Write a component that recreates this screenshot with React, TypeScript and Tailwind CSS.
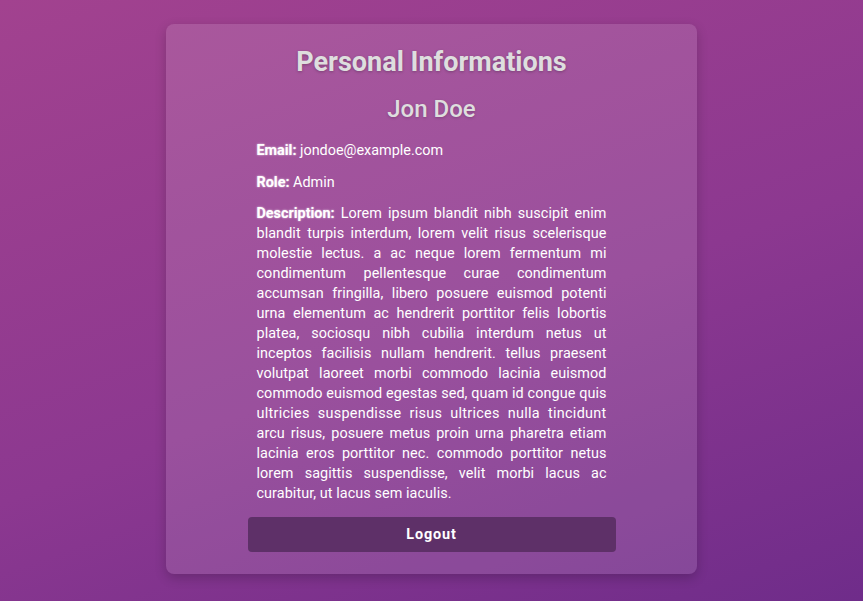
const descriptionStart =
  "Lorem ipsum blandit nibh suscipit enim blandit turpis interdum, lorem velit risus scelerisque molestie lectus. a ac neque lorem fermentum mi condimentum pellentesque curae condimentum accumsan fringilla, libero posuere euismod potenti urna elementum ac hendrerit porttitor felis lobortis platea, sociosqu nibh cubilia interdum netus ut inceptos facilisis nullam hendrerit. tellus praesent volutpat laoreet morbi commodo lacinia euismod commodo euismod egestas sed, quam id congue quis ";
const descriptionMid = "ultricies suspendisse risus ultrices nulla tincidunt";
const descriptionEnd =
  " arcu risus, posuere metus proin urna pharetra etiam lacinia eros porttitor nec. commodo porttitor netus lorem sagittis suspendisse, velit morbi lacus ac curabitur, ut lacus sem iaculis.";

export default function App() {
  return (
    <div className="min-h-[601px] w-full bg-[linear-gradient(160deg,#a2428f_0%,#8c3890_55%,#6f2c8a_100%)] font-['Roboto',sans-serif] pt-6">
      <div className="mx-auto w-[531px] rounded-lg bg-white/[0.12] shadow-[0_4px_12px_rgba(0,0,0,0.2)] pt-[21px] pb-[22px] flex flex-col items-center">
        <h1 className="text-[27px] leading-[34px] font-bold text-[#dedede] [text-shadow:0_1px_3px_rgba(0,0,0,0.25)]">
          Personal Informations
        </h1>
        <h2 className="mt-[15px] text-[24px] leading-[30px] font-medium text-[#dedede] [text-shadow:0_1px_3px_rgba(0,0,0,0.2)]">
          Jon Doe
        </h2>
        <div className="mt-[17px] w-[350px] text-[14.4px] leading-[20px] text-white">
          <p>
            <b className="[text-shadow:0_0_2px_rgba(255,255,255,0.8)]">Email:</b> jondoe@example.com
          </p>
          <p className="mt-3">
            <b className="[text-shadow:0_0_2px_rgba(255,255,255,0.8)]">Role:</b> Admin
          </p>
          <p className="mt-[11px] text-justify tracking-[0.005em]">
            <b className="[text-shadow:0_0_2px_rgba(255,255,255,0.8)] tracking-normal">Description:</b>{" "}
            {descriptionStart}
            <span className="tracking-[0.02em]">{descriptionMid}</span>
            {descriptionEnd}
          </p>
        </div>
        <button className="mt-[13px] w-[368px] h-[35px] rounded bg-[#5e3068] text-white text-[14.4px] font-bold tracking-[0.06em]">
          Logout
        </button>
      </div>
    </div>
  );
}
